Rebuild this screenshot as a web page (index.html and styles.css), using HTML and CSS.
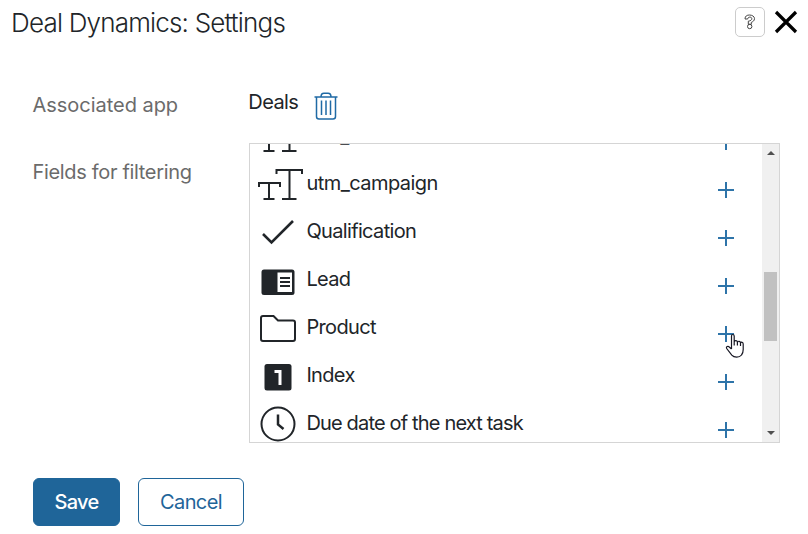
FILE: index.html
```html
<!DOCTYPE html>
<html lang="en">
<head>
<meta charset="utf-8">
<title>Deal Dynamics: Settings</title>
<link rel="stylesheet" href="styles.css">
</head>
<body>
<header class="header">
  <h1 class="title">Deal Dynamics: Settings</h1>
  <button class="help" aria-label="Help"><svg width="14" height="18" viewBox="0 0 14 18"><path d="M2 6C2 3 4 2 6.500 2S11.500 3.400 11.500 5.600C11.500 8 9.500 8.800 8.300 9.400V11.300H5.300V8.200C7.500 7.800 8.800 7 8.800 5.700 8.800 4.700 8 4.100 6.800 4.100 5.500 4.100 5 4.800 4.700 6Z"/><circle cx="6.700" cy="13.500" r="2.200"/></svg></button>
  <button class="close" aria-label="Close"><svg width="24" height="24" viewBox="0 0 24 24"><path d="M2 2L22 22M22 2L2 22"/></svg></button>
</header>
<main class="form">
  <div class="label app-label">Associated app</div>
  <div class="app"><span class="app-name">Deals</span>
    <svg class="trash" width="24" height="28" viewBox="0 0 24 28"><path d="M.5 5H23.500M2.500 5V24.500Q2.500 27 5 27H19Q21.500 27 21.500 24.500V5M7 5C7 2 8.500 1.300 10 1.300H14C15.500 1.300 17 2 17 5M7.500 8.500V23M12 8.500V23M16.500 8.500V23"/></svg>
  </div>
  <div class="label fields-label">Fields for filtering</div>
  <div class="list">
    <ul class="rows">
      <li class="row"><svg class="icon" viewBox="0 0 52 48"><path d="M22.500 12V8H48V12M35.500 8V37M28 37H42.500M5 25V21H26V25M15 21V37M9.500 37H20.500"/></svg><span class="name clipped">utm_term</span><i class="plus"></i></li>
      <li class="row"><svg class="icon" viewBox="0 0 52 48"><path d="M22.500 12V8H48V12M35.500 8V37M28 37H42.500M5 25V21H26V25M15 21V37M9.500 37H20.500"/></svg><span class="name utm">utm_campaign</span><i class="plus"></i></li>
      <li class="row"><svg class="icon" viewBox="0 0 52 48"><path class="check" d="M9 24L17.500 32.500L39 11"/></svg><span class="name">Qualification</span><i class="plus"></i></li>
      <li class="row"><svg class="icon" viewBox="0 0 52 48"><rect class="solid" x="7.500" y="11.500" width="33" height="25.500" rx="2.500"/><rect class="paper" x="23.500" y="14.500" width="14.500" height="19.500"/><path d="M26 20H36M26 24H36M26 28H36"/></svg><span class="name">Lead</span><i class="plus"></i></li>
      <li class="row"><svg class="icon" viewBox="0 0 52 48"><path d="M9 10H19.500L24 14.500H39Q41 14.500 41 16.500V33Q41 35 39 35H9Q7 35 7 33V12Q7 10 9 10Z"/></svg><span class="name">Product</span><i class="plus"></i></li>
      <li class="row"><svg class="icon" viewBox="0 0 52 48"><rect class="solid" x="10.500" y="10" width="27" height="26.500" rx="2.500"/><path class="one" d="M20.500 17.500H26V31"/></svg><span class="name">Index</span><i class="plus"></i></li>
      <li class="row"><svg class="icon" viewBox="0 0 52 48"><circle cx="24" cy="22" r="16.500"/><path class="hands" d="M24 12.500V22.500L29.500 27"/></svg><span class="name due">Due date of the next task</span><i class="plus"></i></li>
    </ul>
    <div class="scrollbar"><i class="up"></i><i class="thumb"></i><i class="down"></i></div>
  </div>
</main>
<footer class="actions"><button class="btn save">Save</button><button class="btn cancel">Cancel</button></footer>
<svg class="pointer" width="20" height="26" viewBox="0 0 20 26"><path d="M6.500 16V3Q6.500 1.500 7.800 1.500T9.200 3V9Q9.500 7.500 11 7.700T12.400 9.500Q12.800 8 14.200 8.300T15.500 10Q16 9 17.100 9.300T18.200 11V16.500Q18.200 20 16.500 22 14.800 24.200 11.700 24.200 8.500 24.200 6.800 22.200L1.700 15.500Q1 14 2.200 13.500T4.500 14.200L6.500 16M9.200 8.500V12.500M12.400 9.500V12.500M15.500 10V13"/></svg>
</body>
</html>
```
FILE: styles.css
```css
* { box-sizing: border-box; }
body {
  margin: 0;
  width: 808px;
  height: 534px;
  overflow: hidden;
  background: #fff;
  color: #212529;
  font: 20px/24px Inter, "Liberation Sans", sans-serif;
}
button { font: inherit; padding: 0; }
svg { display: block; flex: none; fill: none; }
.header { display: flex; align-items: flex-start; height: 92px; padding: 7px 10px 0 11px; }
.title { flex: 1; margin: 0; font-size: 26px; line-height: 32px; font-weight: 350; letter-spacing: -0.81px; }
.help {
  display: flex; align-items: center; justify-content: center;
  width: 30px; height: 30px; margin-right: 9px;
  background: #fff; border: 1px solid #ccc; border-radius: 5px;
}
.help svg { stroke: #444; stroke-width: 1; }
.close { margin-top: 3px; width: 24px; height: 24px; border: 0; background: none; }
.close svg { stroke: #000; stroke-width: 3.2; }
.form { display: grid; grid-template-columns: 216px 531px; grid-template-rows: 51px 300px; padding-left: 33px; }
.label { color: #6b6b6b; margin-left: -0.5px; letter-spacing: -0.33px; }
.app-label { padding-top: 1px; letter-spacing: -0.03px; }
.fields-label { padding-top: 17px; }
.app { display: flex; align-items: flex-start; gap: 15.7px; }
.app-name { margin: -2px 0 0 -0.7px; width: 50px; letter-spacing: -0.6px; }
.trash { stroke: #1f6aa5; stroke-width: 1.5; }
.list { display: flex; height: 300px; overflow: hidden; border: 1px solid #d5d5d5; }
.rows { flex: 1; margin: -30px 0 0; padding: 0; list-style: none; }
.row { display: flex; height: 48px; padding: 0 28px 0 4px; }
.icon { width: 52px; height: 48px; stroke: #212529; stroke-width: 2; }
.icon .solid { fill: #212529; stroke: none; }
.icon .paper { fill: #fff; stroke: none; }
.icon .check { stroke-width: 2.6; }
.icon .one { stroke: #fff; stroke-width: 3; }
.icon .hands { stroke-width: 2.5; }
.name { flex: 1; margin-top: 9px; padding-left: 0.4px; letter-spacing: -0.65px; white-space: nowrap; }
.name.utm { letter-spacing: -0.55px; }
.name.clipped { margin-top: 10px; }
.name.due { letter-spacing: -0.83px; }
.plus {
  flex: none; width: 16px; height: 16px; margin-top: 20px;
  background: linear-gradient(#2e74a9, #2e74a9) center / 16px 2px no-repeat, linear-gradient(#2e74a9, #2e74a9) center / 2px 16px no-repeat;
}
.scrollbar { display: flex; flex-direction: column; align-items: center; width: 17px; padding: 7px 0; background: #f0f0f0; }
.up, .down { border: 4px solid transparent; height: 4px; width: 8px; }
.up { border-top: 0; border-bottom-color: #505050; }
.down { margin-top: auto; border-bottom: 0; border-top-color: #505050; }
.thumb { width: 13px; height: 69px; margin-top: 117px; background: #c1c1c1; }
.actions { display: flex; gap: 18px; padding: 35px 33px 0; }
.btn { height: 48px; border: 1px solid #1f6599; border-radius: 6px; letter-spacing: -0.6px; }
.save { width: 87px; background: #1f6599; color: #fff; font-weight: 500; letter-spacing: -0.7px; }
.cancel { width: 106px; background: #fff; color: #1f6599; }
.pointer { position: absolute; left: 725px; top: 333px; fill: #fff; stroke: #171723; stroke-width: 1.2; }
```
